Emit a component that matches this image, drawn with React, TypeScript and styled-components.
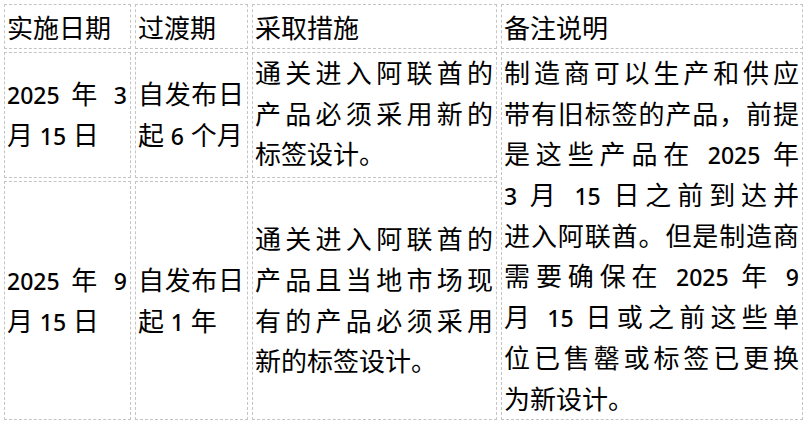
import { createGlobalStyle } from "styled-components";
import styled from "styled-components";

const GlobalStyle = createGlobalStyle`
  html, body {
    margin: 0;
    padding: 0;
    background: #ffffff;
  }
  body {
    font-family: "Noto Sans", "Noto Sans CJK SC", sans-serif;
    color: #000000;
    overflow: hidden;
  }
`;

const Page = styled.div`
  padding-top: 1px;
  width: 810px;
  height: 423px;
`;

const Table = styled.table`
  border-collapse: separate;
  border-spacing: 4px 3px;
  table-layout: fixed;
  width: 807px;
`;

const Cell = styled.td<{ $align?: "top" | "middle" }>`
  border: 1px dashed #c4c4c4;
  padding: 0 3px 0 2px;
  vertical-align: ${({ $align }) => $align ?? "middle"};
  font-size: 26px;
  line-height: 40.7px;
  box-sizing: border-box;
  overflow: hidden;
`;

const HeadCell = styled.th`
  border: 1px dashed #c4c4c4;
  padding: 0 2px 0 2px;
  height: 45px;
  box-sizing: border-box;
  vertical-align: middle;
  text-align: left;
  font-family: "Noto Sans CJK SC", sans-serif;
  font-weight: 400;
  font-size: 26px;
  white-space: nowrap;
`;

const Line = styled.div<{ $last?: boolean }>`
  height: 40.7px;
  white-space: nowrap;
  text-align: ${({ $last }) => ($last ? "left" : "justify")};
  text-align-last: ${({ $last }) => ($last ? "left" : "justify")};
`;

const Num = styled.span`
  font-size: 23px;
  font-weight: 500;
  line-height: 1;
`;

type Row = {
  date: string[];
  period: string[];
  action: string[];
};

const rows: Row[] = [
  {
    date: ["2025 年 3", "月 15 日"],
    period: ["自发布日", "起 6 个月"],
    action: ["通关进入阿联酋的", "产品必须采用新的", "标签设计。"],
  },
  {
    date: ["2025 年 9", "月 15 日"],
    period: ["自发布日", "起 1 年"],
    action: ["通关进入阿联酋的", "产品且当地市场现", "有的产品必须采用", "新的标签设计。"],
  },
];

const note = [
  "制造商可以生产和供应",
  "带有旧标签的产品，前提",
  "是这些产品在 2025 年",
  "3 月 15 日之前到达并",
  "进入阿联酋。但是制造商",
  "需要确保在 2025 年 9",
  "月 15 日或之前这些单",
  "位已售罄或标签已更换",
  "为新设计。",
];

// digits use the Latin face at a smaller size, as in the source document
function withNumbers(text: string) {
  return text.split(/(\d+)/).map((part, i) =>
    /^\d+$/.test(part) ? <Num key={i}>{part}</Num> : part
  );
}

function Lines({ lines }: { lines: string[] }) {
  return (
    <>
      {lines.map((text, i) => (
        <Line key={i} $last={i === lines.length - 1}>
          {withNumbers(text)}
        </Line>
      ))}
    </>
  );
}

export default function App() {
  return (
    <>
      <GlobalStyle />
      <Page>
        <Table>
          <colgroup>
            <col style={{ width: 127 }} />
            <col style={{ width: 113 }} />
            <col style={{ width: 245 }} />
            <col style={{ width: 302 }} />
          </colgroup>
          <thead>
            <tr>
              <HeadCell>实施日期</HeadCell>
              <HeadCell>过渡期</HeadCell>
              <HeadCell>采取措施</HeadCell>
              <HeadCell>备注说明</HeadCell>
            </tr>
          </thead>
          <tbody>
            {rows.map((row, i) => (
              <tr key={i} style={{ height: i === 0 ? 126 : 239 }}>
                <Cell>
                  <Lines lines={row.date} />
                </Cell>
                <Cell>
                  <Lines lines={row.period} />
                </Cell>
                <Cell $align={i === 0 ? "top" : "middle"}>
                  <Lines lines={row.action} />
                </Cell>
                {i === 0 && (
                  <Cell rowSpan={2} $align="top">
                    <Lines lines={note} />
                  </Cell>
                )}
              </tr>
            ))}
          </tbody>
        </Table>
      </Page>
    </>
  );
}
